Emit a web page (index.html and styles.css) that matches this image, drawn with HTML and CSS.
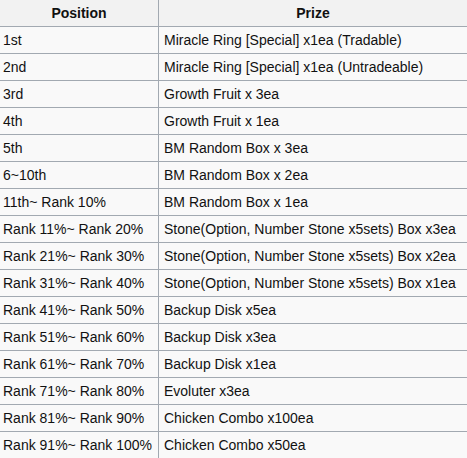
FILE: index.html
```html
<!DOCTYPE html>
<html>
<head>
<meta charset="utf-8">
<link rel="stylesheet" href="styles.css">
</head>
<body>
<table class="prizes">
<thead>
<tr><th class="pos">Position</th><th>Prize</th></tr>
</thead>
<tbody>
<tr><td class="pos">1st</td><td>Miracle Ring [Special] x1ea (Tradable)</td></tr>
<tr><td class="pos">2nd</td><td>Miracle Ring [Special] x1ea (Untradeable)</td></tr>
<tr><td class="pos">3rd</td><td>Growth Fruit x 3ea</td></tr>
<tr><td class="pos">4th</td><td>Growth Fruit x 1ea</td></tr>
<tr><td class="pos">5th</td><td>BM Random Box x 3ea</td></tr>
<tr><td class="pos">6~10th</td><td>BM Random Box x 2ea</td></tr>
<tr><td class="pos">11th~ Rank 10%</td><td>BM Random Box x 1ea</td></tr>
<tr><td class="pos">Rank 11%~ Rank 20%</td><td>Stone(Option, Number Stone x5sets) Box x3ea</td></tr>
<tr><td class="pos">Rank 21%~ Rank 30%</td><td>Stone(Option, Number Stone x5sets) Box x2ea</td></tr>
<tr><td class="pos">Rank 31%~ Rank 40%</td><td>Stone(Option, Number Stone x5sets) Box x1ea</td></tr>
<tr><td class="pos">Rank 41%~ Rank 50%</td><td>Backup Disk x5ea</td></tr>
<tr><td class="pos">Rank 51%~ Rank 60%</td><td>Backup Disk x3ea</td></tr>
<tr><td class="pos">Rank 61%~ Rank 70%</td><td>Backup Disk x1ea</td></tr>
<tr><td class="pos">Rank 71%~ Rank 80%</td><td>Evoluter x3ea</td></tr>
<tr><td class="pos">Rank 81%~ Rank 90%</td><td>Chicken Combo x100ea</td></tr>
<tr><td class="pos">Rank 91%~ Rank 100%</td><td>Chicken Combo x50ea</td></tr>
</tbody>
</table>
</body>
</html>
```

FILE: styles.css
```css
html, body {
  margin: 0;
  padding: 0;
  background: #f9f9f9;
}
.prizes {
  border-collapse: collapse;
  width: 467px;
  font-family: "Liberation Sans", Arial, sans-serif;
  font-size: 14px;
  color: #111;
  background: #f9f9f9;
  table-layout: fixed;
}
.prizes th, .prizes td {
  height: 26px;
  padding: 0;
  border-bottom: 1px solid #a2a9b1;
  text-align: left;
  white-space: nowrap;
  box-sizing: content-box;
  line-height: 26px;
}
.prizes th.pos {
  width: 158px;
  border-right: 1px solid #a2a9b1;
}
.prizes td.pos {
  padding-left: 3px;
  border-right: 1px solid #a2a9b1;
}
.prizes th {
  background: #f2f2f2;
  font-weight: bold;
  text-align: center;
}
.prizes td:last-child {
  padding-left: 5px;
}
```
